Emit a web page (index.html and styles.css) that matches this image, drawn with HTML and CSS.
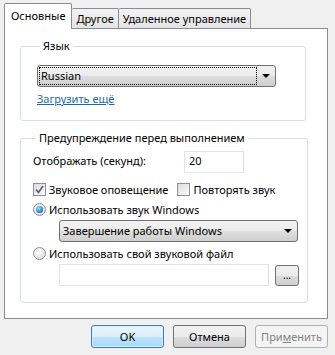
FILE: index.html
```html
<!DOCTYPE html>
<html lang="ru">
<head>
    <meta charset="UTF-8">
    <title>Настройки</title>
    <link rel="stylesheet" href="styles.css">
</head>
<body>
    <div class="dialog">
        <div class="tabs">
            <div class="tab active">Основные</div>
            <div class="tab">Другое</div>
            <div class="tab">Удаленное управление</div>
        </div>

        <div class="panel">
            <fieldset class="group group-lang">
                <legend>Язык</legend>
                <div class="combo focused">
                    <span class="combo-text">Russian</span>
                    <span class="combo-arrow"></span>
                </div>
                <a href="#" class="link">Загрузить ещё</a>
            </fieldset>

            <fieldset class="group group-warn">
                <legend>Предупреждение перед выполнением</legend>
                <div class="row row-seconds">
                    <span class="label">Отображать (секунд):</span>
                    <div class="textbox seconds">20</div>
                </div>
                <div class="row row-checks">
                    <label class="check checked">
                        <span class="box">
                            <svg width="9" height="9" viewBox="0 0 9 9"><path d="M1 4.5 L3.5 7.5 L8 1" fill="none" stroke="#4d6185" stroke-width="1.6"/></svg>
                        </span>
                        Звуковое оповещение
                    </label>
                    <label class="check repeat">
                        <span class="box"></span>
                        Повторять звук
                    </label>
                </div>
                <label class="row radio selected">
                    <span class="dot"></span>
                    Использовать звук Windows
                </label>
                <div class="combo indented">
                    <span class="combo-text">Завершение работы Windows</span>
                    <span class="combo-arrow"></span>
                </div>
                <label class="row radio radio-file">
                    <span class="dot"></span>
                    Использовать свой звуковой файл
                </label>
                <div class="row row-file">
                    <div class="textbox file"></div>
                    <button class="button browse">...</button>
                </div>
            </fieldset>
        </div>

        <div class="footer">
            <button class="button default">OK</button>
            <button class="button">Отмена</button>
            <button class="button disabled">При<u>м</u>енить</button>
        </div>
    </div>
</body>
</html>
```

FILE: styles.css
```css
body {
    margin: 0;
    background-color: #f0f0f0;
    font-family: "Segoe UI", "Noto Sans", sans-serif;
    font-size: 11px;
    color: #000;
}
.dialog {
    padding: 4px 7px 0 4px;
}
.tabs {
    display: flex;
    align-items: flex-end;
    height: 24px;
    position: relative;
    z-index: 1;
}
.tab {
    height: 19px;
    line-height: 19px;
    padding: 0 4px;
    border: 1px solid #898c95;
    border-bottom: none;
    border-left: none;
    background: linear-gradient(#f3f3f3, #e5e5e5);
    border-radius: 2px 2px 0 0;
}
.tab.active {
    line-height: 24px;
    padding: 0 6px;
    border-left: 1px solid #898c95;
    background: #fff;
    margin-bottom: -1px;
    height: 25px;
}
.panel {
    background: #fff;
    border: 1px solid #898c95;
    padding: 10px 21px 15px 15px;
}
.group {
    margin: 0;
    padding: 0;
    border: 1px solid #d5dfe5;
    border-radius: 3px;
    display: flex;
    flex-direction: column;
}
.group legend {
    margin-left: 3px;
    padding: 0 3px;
    line-height: 14px;
}
.group-lang {
    padding: 12px 0 14px 16px;
}
.group-warn {
    margin-top: 10px;
    padding: 4px 8px 16px 12px;
}
.combo {
    position: relative;
    width: 237px;
    height: 20px;
    border: 1px solid #707070;
    border-radius: 3px;
    background: linear-gradient(#f2f2f2 0%, #ebebeb 50%, #dddddd 51%, #cfcfcf 100%);
    display: flex;
    align-items: center;
}
.combo-text {
    flex: 1;
    margin: 0 18px 0 1px;
    padding-left: 1px;
    line-height: 16px;
    border: 1px dotted transparent;
}
.focused .combo-text {
    border-color: #000;
}
.combo-arrow {
    position: absolute;
    right: 5px;
    top: 8px;
    border-left: 4px solid transparent;
    border-right: 4px solid transparent;
    border-top: 4px solid #000;
}
.link {
    margin-top: 5px;
    color: #1a6aa8;
    line-height: 14px;
    align-self: flex-start;
}
.row {
    display: flex;
    align-items: center;
}
.row-seconds {
    height: 22px;
}
.label {
    width: 151px;
}
.textbox {
    height: 20px;
    border: 1px solid #abadb3;
    border-top-color: #e3e3e3;
    border-left-color: #e2e3ea;
    border-right-color: #dbdfe6;
    border-bottom-color: #e3e9ef;
    background: #fff;
    line-height: 18px;
    padding-left: 4px;
}
.seconds {
    width: 54px;
    margin-top: 4px;
}
.row-checks {
    margin-top: 10px;
    height: 16px;
}
.check {
    display: flex;
    align-items: center;
    gap: 3px;
}
.repeat {
    margin-left: 9px;
}
.box {
    width: 11px;
    height: 11px;
    border: 1px solid #8e8f8f;
    background: linear-gradient(135deg, #dcdcdc, #fbfbfb);
    display: flex;
    align-items: center;
    justify-content: center;
}
.radio {
    margin-top: 4px;
    height: 16px;
    gap: 3px;
}
.radio-file {
    margin-top: 3px;
}
.dot {
    width: 11px;
    height: 11px;
    border: 1px solid #8e8f8f;
    border-radius: 50%;
    background: radial-gradient(circle at 40% 35%, #ffffff, #d4d4d4);
    display: flex;
    align-items: center;
    justify-content: center;
}
.selected .dot::after {
    content: "";
    width: 7px;
    height: 7px;
    border-radius: 50%;
    background: radial-gradient(circle at 40% 35%, #a8e4ff, #2a8cd0 55%, #0d3f78);
}
.indented {
    margin: 3px 0 0 26px;
}
.row-file {
    margin-top: 3px;
    height: 22px;
    padding-left: 26px;
}
.file {
    width: 204px;
}
.button {
    font-family: inherit;
    font-size: 11px;
    height: 23px;
    border: 1px solid #707070;
    border-radius: 3px;
    background: linear-gradient(#f2f2f2 0%, #ebebeb 50%, #dddddd 51%, #cfcfcf 100%);
    color: #000;
    padding: 0;
}
.browse {
    width: 24px;
    height: 21px;
    margin-left: 6px;
    font-size: 10px;
    line-height: 14px;
}
.footer {
    display: flex;
    justify-content: flex-end;
    gap: 9px;
    padding-top: 6px;
}
.footer .button {
    width: 73px;
}
.default {
    border-color: #3c7fb1;
    box-shadow: inset 0 0 0 1px #d8ecf8;
    background: linear-gradient(#eaf6fd 0%, #d9f0fc 50%, #bee6fd 51%, #a7d9f5 100%);
}
.disabled {
    border-color: #adb2b5;
    background: #f4f4f4;
    color: #838383;
}
```
